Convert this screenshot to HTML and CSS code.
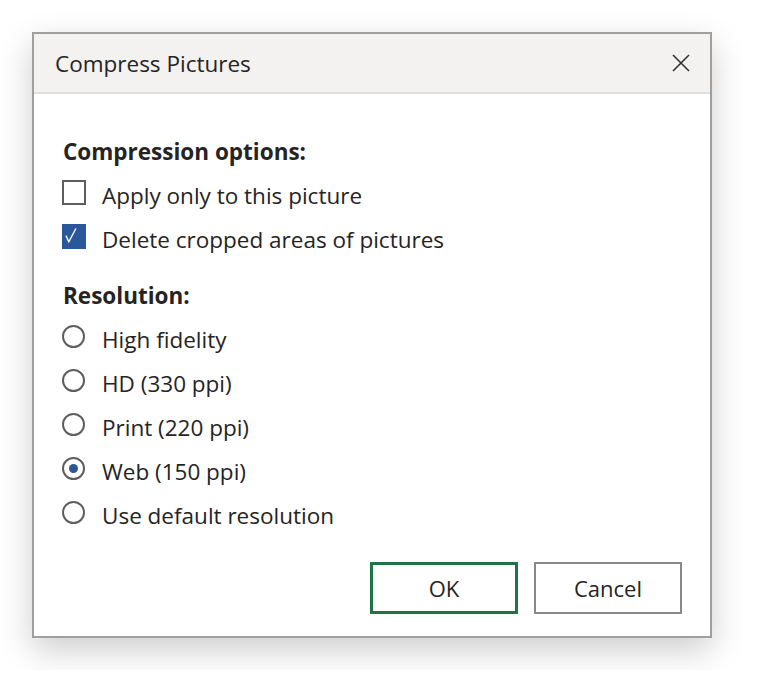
FILE: index.html
```html
<!DOCTYPE html>
<html lang="en">
<head>
    <meta charset="UTF-8">
    <title>Compress Pictures</title>
    <link rel="stylesheet" href="styles.css">
</head>
<body>
    <div class="dialog">
        <div class="title-bar">
            <span class="title">Compress Pictures</span>
            <button class="btn-close" aria-label="Close">
                <svg width="18" height="18" viewBox="0 0 18 18">
                    <path d="M1 1L17 17M17 1L1 17" stroke="#323130" stroke-width="1.6" fill="none"/>
                </svg>
            </button>
        </div>
        <div class="content">
            <div class="group">
                <div class="heading">Compression options:</div>
                <label class="row"><span class="check"></span>Apply only to this picture</label>
                <label class="row"><span class="check checked">
                    <svg width="20" height="24" viewBox="0 0 20 24">
                        <path d="M1 9.5L4 16L11.5 2" stroke="#fff" stroke-width="1.4" fill="none"/>
                    </svg>
                </span>Delete cropped areas of pictures</label>
            </div>
            <div class="group">
                <div class="heading">Resolution:</div>
                <label class="row"><span class="radio"></span>High fidelity</label>
                <label class="row"><span class="radio"></span>HD (330 ppi)</label>
                <label class="row"><span class="radio"></span>Print (220 ppi)</label>
                <label class="row"><span class="radio selected"></span>Web (150 ppi)</label>
                <label class="row"><span class="radio"></span>Use default resolution</label>
            </div>
            <div class="btn-container">
                <button class="btn btn-ok">OK</button>
                <button class="btn btn-cancel">Cancel</button>
            </div>
        </div>
    </div>
</body>
</html>
```
FILE: styles.css
```css
*{
    margin: 0;
    padding: 0;
    box-sizing: border-box;
}
body{
    background-color: #ffffff;
    font-family: "Open Sans", "Noto Sans", sans-serif;
    color: #252423;
    padding: 32px;
}
.dialog{
    width: 680px;
    height: 606px;
    border: 2px solid #a19f9d;
    background-color: #ffffff;
    box-shadow: 0 12px 32px rgba(0, 0, 0, 0.2);
}
.title-bar{
    height: 58px;
    background-color: #f3f2f1;
    border-bottom: 2px solid #e1dfdd;
    display: flex;
    align-items: center;
    justify-content: space-between;
    padding: 0 20px 0 21px;
    box-sizing: content-box;
}
.title{
    font-size: 22.5px;
    margin-top: 1px;
}
.btn-close{
    border: none;
    background: none;
    width: 18px;
    height: 18px;
    display: flex;
}
.content{
    padding: 40px 28px 0 28px;
}
.group + .group{
    margin-top: 20px;
}
.heading{
    height: 36px;
    line-height: 36px;
    font-size: 22.5px;
    font-weight: bold;
    padding-left: 1px;
}
.row{
    height: 44px;
    display: flex;
    align-items: center;
    padding-top: 6px;
    font-size: 22.5px;
}
.check{
    width: 24px;
    height: 25px;
    border: 2px solid #605e5c;
    margin-right: 16px;
    margin-top: -5px;
    display: flex;
}
.check.checked{
    background-color: #2b579a;
    border-color: #2b579a;
    padding-left: 1px;
}
.radio{
    width: 23px;
    height: 23px;
    border: 2px solid #605e5c;
    border-radius: 50%;
    margin-right: 17px;
    margin-top: -5px;
    display: flex;
    align-items: center;
    justify-content: center;
}
.radio.selected::after{
    content: "";
    width: 9px;
    height: 9px;
    border-radius: 50%;
    background-color: #2b579a;
}
.btn-container{
    margin-top: 28px;
    display: flex;
    justify-content: flex-end;
    gap: 16px;
}
.btn{
    width: 148px;
    height: 52px;
    background-color: #ffffff;
    font-family: inherit;
    font-size: 22px;
    color: #252423;
}
.btn-ok{
    border: 3px solid #217346;
}
.btn-cancel{
    border: 2px solid #8a8886;
}
```
